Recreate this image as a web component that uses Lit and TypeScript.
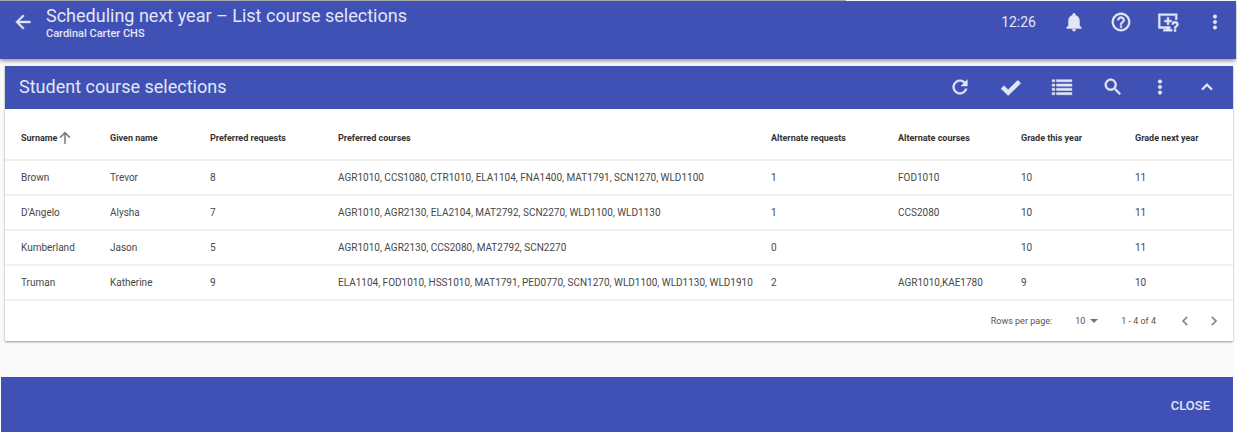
import { LitElement, html, css, svg } from "lit";
import { customElement, property, state } from "lit/decorators.js";

const icons = {
  back: svg`<path d="M20 11H7.830l5.590-5.590L12 4l-8 8 8 8 1.410-1.410L7.830 13H20v-2z"/>`,
  bell: svg`<path d="M12 22c1.100 0 2-.9 2-2h-4c0 1.100.89 2 2 2zm6-6v-5c0-3.070-1.640-5.640-4.500-6.320V4c0-.83-.67-1.500-1.500-1.500s-1.500.67-1.500 1.500v.68C7.630 5.360 6 7.920 6 11v5l-2 2v1h16v-1l-2-2z"/>`,
  help: svg`<path d="M11 18h2v-2h-2v2zm1-16C6.480 2 2 6.480 2 12s4.480 10 10 10 10-4.480 10-10S17.520 2 12 2zm0 18c-4.410 0-8-3.590-8-8s3.590-8 8-8 8 3.590 8 8-3.590 8-8 8zm0-14c-2.210 0-4 1.790-4 4h2c0-1.100.9-2 2-2s2 .9 2 2c0 2-3 1.750-3 5h2c0-2.250 3-2.500 3-5 0-2.210-1.790-4-4-4z"/>`,
  screen: svg`<path d="M1.500 3h20.500v6.500h-2V5H3.500v12h11v2H14v1h2.500v2H7v-2h3v-1H1.500zM11 7h2v3h3v2h-3v3h-2v-3H8v-2h3z"/><path d="M18.600 20.200h2.200v2.200h-2.200zM16 14.800a3.700 3.700 0 0 1 7.400 0c0 2.200-2.600 2.300-2.600 4.400h-2.200c0-3 2.600-3 2.600-4.400a1.500 1.500 0 0 0-3 0z"/>`,
  dots: svg`<path d="M12 8c1.100 0 2-.9 2-2s-.9-2-2-2-2 .9-2 2 .9 2 2 2zm0 2c-1.100 0-2 .9-2 2s.9 2 2 2 2-.9 2-2-.9-2-2-2zm0 6c-1.100 0-2 .9-2 2s.9 2 2 2 2-.9 2-2-.9-2-2-2z"/>`,
  refresh: svg`<path d="M17.650 6.350C16.200 4.900 14.210 4 12 4c-4.420 0-7.990 3.580-7.990 8s3.570 8 7.990 8c3.730 0 6.840-2.550 7.730-6h-2.080c-.82 2.330-3.040 4-5.650 4-3.310 0-6-2.690-6-6s2.690-6 6-6c1.660 0 3.140.69 4.220 1.780L13 11h7V4l-2.350 2.350z"/>`,
  check: svg`<path d="M1.200 13.800 4.400 10.600l4.500 4.400L19.400 4.700 22.700 8 8.900 21.400z"/>`,
  list: svg`<path d="M1.200 4h3v2.400h-3zM6 4h16.800v2.400H6zM1.200 8.700h3v2.400h-3zM6 8.700h16.800v2.400H6zM1.200 13.400h3v2.400h-3zM6 13.400h16.800v2.400H6zM1.200 18.100h3v2.400h-3zM6 18.100h16.800v2.400H6z"/>`,
  search: svg`<path d="M15.500 14h-.79l-.28-.27C15.410 12.590 16 11.110 16 9.500 16 5.910 13.090 3 9.500 3S3 5.910 3 9.500 5.910 16 9.500 16c1.610 0 3.090-.59 4.230-1.570l.27.28v.79l5 4.990L20.490 19l-4.990-5zm-6 0C7.010 14 5 11.990 5 9.500S7.010 5 9.500 5 14 7.010 14 9.500 11.990 14 9.500 14z"/>`,
  up: svg`<path d="M12 8l-6 6 1.410 1.410L12 10.830l4.590 4.580L18 14z"/>`,
  prev: svg`<path d="M15.410 7.410L14 6l-6 6 6 6 1.410-1.410L10.830 12z"/>`,
  next: svg`<path d="M10 6L8.590 7.410 13.170 12l-4.580 4.590L10 18l6-6z"/>`,
  sort: svg`<path d="M10.900 22V5.600L4.500 12 2.900 10.400 12 1.400l9.100 9-1.600 1.600-6.400-6.400V22z"/>`,
};
type IconName = keyof typeof icons;

@customElement("md-icon")
export class MdIcon extends LitElement {
  @property() name: IconName = "dots";

  static styles = css`
    :host { display: block; width: 22px; height: 22px; }
    .glyph {
      display: block; width: 100%; height: 100%; overflow: visible;
      fill: currentColor; stroke: currentColor; stroke-width: 0.5;
    }
  `;

  render() {
    return html`<svg class="glyph" viewBox="0 0 24 24" aria-hidden="true">${icons[this.name]}</svg>`;
  }
}

interface Column { key: string; label: string; }

const columns: Column[] = [
  { key: "surname", label: "Surname" },
  { key: "given", label: "Given name" },
  { key: "requests", label: "Preferred requests" },
  { key: "courses", label: "Preferred courses" },
  { key: "altRequests", label: "Alternate requests" },
  { key: "altCourses", label: "Alternate courses" },
  { key: "grade", label: "Grade this year" },
  { key: "nextGrade", label: "Grade next year" },
];

const students: string[][] = [
  ["Brown", "Trevor", "8", "AGR1010, CCS1080, CTR1010, ELA1104, FNA1400, MAT1791, SCN1270, WLD1100", "1", "FOD1010", "10", "11"],
  ["D'Angelo", "Alysha", "7", "AGR1010, AGR2130, ELA2104, MAT2792, SCN2270, WLD1100, WLD1130", "1", "CCS2080", "10", "11"],
  ["Kumberland", "Jason", "5", "AGR1010, AGR2130, CCS2080, MAT2792, SCN2270", "0", "", "10", "11"],
  ["Truman", "Katherine", "9", "ELA1104, FOD1010, HSS1010, MAT1791, PED0770, SCN1270, WLD1100, WLD1130, WLD1910", "2", "AGR1010,KAE1780", "9", "10"],
];

@customElement("course-table")
export class CourseTable extends LitElement {
  @state() private descending = false;

  static styles = css`
    :host { display: block; }
    .table { width: 100%; border-collapse: separate; border-spacing: 0; table-layout: fixed; }
    .surname { width: 89px; }
    .given { width: 100px; }
    .requests { width: 128px; }
    .altRequests { width: 127px; }
    .altCourses { width: 123px; }
    .grade, .nextGrade { width: 114px; }
    .head, .cell {
      box-sizing: border-box; padding: 0 0 0 16px; text-align: left;
      white-space: nowrap; border-bottom: 2px solid #f0f0f0;
    }
    .head { height: 52px; font-size: 9px; font-weight: 700; color: #333; padding-top: 8px; }
    .cell { height: 35px; font-size: 10px; color: #484848; }
    .sort {
      display: flex; align-items: center; gap: 1px; padding: 0; border: 0;
      background: none; font: inherit; color: inherit; cursor: pointer;
    }
    .arrow { width: 14px; height: 14px; color: #757575; }
  `;

  render() {
    const rows = this.descending ? [...students].reverse() : students;
    return html`
      <table class="table">
        <colgroup>${columns.map((c) => html`<col class=${c.key} />`)}</colgroup>
        <thead>
          <tr>
            ${columns.map((c, i) => html`
              <th class="head" scope="col">
                ${i === 0
                  ? html`<button class="sort" @click=${() => (this.descending = !this.descending)}>
                      ${c.label}<md-icon class="arrow" name="sort"></md-icon>
                    </button>`
                  : c.label}
              </th>`)}
          </tr>
        </thead>
        <tbody>
          ${rows.map((r) => html`<tr>${r.map((v) => html`<td class="cell">${v}</td>`)}</tr>`)}
        </tbody>
      </table>
    `;
  }
}

@customElement("app-root")
export class AppRoot extends LitElement {
  static styles = css`
    :host {
      display: block; box-sizing: border-box; min-height: 100vh; padding-right: 1px;
      font-family: Roboto, "Liberation Sans", sans-serif; background: #fff;
    }
    .rule { height: 1px; margin-right: 390px; background: #b0b0b0; }
    .bar {
      position: relative; display: flex; align-items: flex-start; box-sizing: border-box;
      height: 58px; padding: 0 10px 0 12px; background: #3f51b5; color: #e3e6f5;
      box-shadow: 0 2px 4px rgba(0, 0, 0, 0.4);
    }
    .icon-btn {
      display: grid; place-items: center; padding: 0; border: 0;
      background: none; color: inherit; cursor: pointer;
    }
    .back { margin-top: 10px; }
    .titles { flex: 1; padding: 4px 0 0 12px; }
    .title { margin: 0; font-size: 18px; line-height: 22px; font-weight: 400; }
    .school { margin: 0; font-size: 11px; line-height: 13px; font-weight: 500; }
    .actions { display: flex; align-items: center; gap: 25px; height: 42px; }
    .clock { font-size: 14px; margin-right: 2px; }
    .page { margin-right: 3px; padding: 7px 0 36px 1px; background: #fafafa; }
    .card {
      margin-left: 4px; background: #fff;
      box-shadow: 0 1px 2px rgba(0, 0, 0, 0.4);
    }
    .card-head {
      display: flex; align-items: center; justify-content: space-between;
      box-sizing: border-box; height: 43px; padding: 0 15px 2px 14px;
      background: #3f51b5; color: #e3e6f5;
    }
    .card-title { margin: 0; font-size: 18px; font-weight: 400; }
    .tools, .tool-group { display: flex; align-items: center; gap: 25px; }
    .wide { gap: 29px; }
    .pager {
      display: flex; align-items: center; justify-content: flex-end; height: 40px;
      padding-right: 10px; font-size: 9px; color: #555;
    }
    .size {
      display: grid; grid-template-columns: 25px; align-items: center; margin: 0 21px 0 23px;
    }
    .select {
      grid-area: 1 / 1; appearance: none; border: 0; padding: 0; margin: 0; width: 25px;
      background: none; font: inherit; color: inherit;
    }
    .caret {
      grid-area: 1 / 1; justify-self: end; pointer-events: none; margin-right: 2px;
      border: 4px solid transparent; border-top-color: #757575; border-bottom: 0;
    }
    .step { color: #8a8a8a; }
    .range { margin-right: 20px; }
    .nav { width: 18px; height: 18px; }
    .steps { display: flex; gap: 11px; }
    .footer {
      display: flex; align-items: center; justify-content: flex-end; box-sizing: border-box;
      height: 55px; margin: 0 3px 0 1px; padding: 2px 23px 0 0; background: #3f51b5;
    }
    .close {
      padding: 0; border: 0; background: none; font: inherit; font-size: 13px;
      font-weight: 500; color: #e3e6f5; cursor: pointer;
    }
  `;

  private button(name: IconName, label: string) {
    return html`<button class="icon-btn" aria-label=${label}><md-icon name=${name}></md-icon></button>`;
  }

  render() {
    return html`
      <div class="rule"></div>
      <header class="bar">
        <button class="icon-btn back" aria-label="Back"><md-icon name="back"></md-icon></button>
        <div class="titles">
          <h1 class="title">Scheduling next year – List course selections</h1>
          <p class="school">Cardinal Carter CHS</p>
        </div>
        <div class="actions">
          <time class="clock">12:26</time>
          ${this.button("bell", "Notifications")}
          ${this.button("help", "Help")}
          ${this.button("screen", "Screen help")}
          ${this.button("dots", "More")}
        </div>
      </header>
      <main class="page">
        <section class="card">
          <div class="card-head">
            <h2 class="card-title">Student course selections</h2>
            <div class="tools">
              <div class="tool-group wide">
                ${this.button("refresh", "Refresh")}
                ${this.button("check", "Select")}
                ${this.button("list", "List view")}
                ${this.button("search", "Search")}
              </div>
              <div class="tool-group">
                ${this.button("dots", "More")}
                ${this.button("up", "Collapse")}
              </div>
            </div>
          </div>
          <course-table></course-table>
          <div class="pager">
            <label for="rows">Rows per page:</label>
            <span class="size">
              <select class="select" id="rows"><option>10</option><option>25</option><option>50</option></select>
              <span class="caret"></span>
            </span>
            <span class="range">1 - 4 of 4</span>
            <span class="steps">
              <button class="icon-btn step" aria-label="Previous page"><md-icon class="nav" name="prev"></md-icon></button>
              <button class="icon-btn step" aria-label="Next page"><md-icon class="nav" name="next"></md-icon></button>
            </span>
          </div>
        </section>
      </main>
      <footer class="footer"><button class="close">CLOSE</button></footer>
    `;
  }
}
